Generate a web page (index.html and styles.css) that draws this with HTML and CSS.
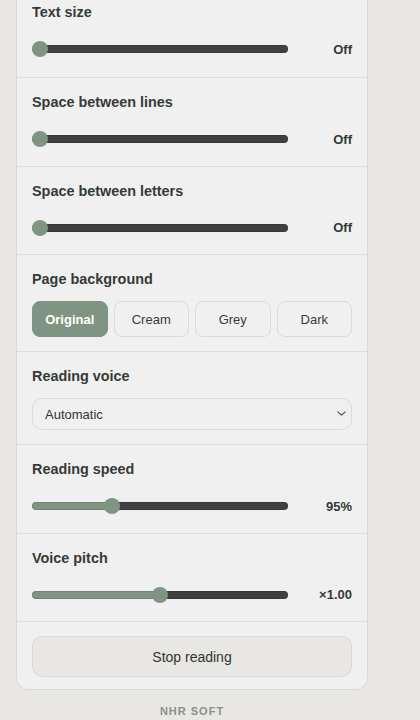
FILE: index.html
```html
<!DOCTYPE html>
<html lang="en">
<head>
<meta charset="utf-8">
<title>Reading settings</title>
<link rel="stylesheet" href="styles.css">
</head>
<body>
<main class="page">
  <div class="panel">
    <section class="section section-slider">
      <h3 class="label">Text size</h3>
      <div class="slider-row">
        <input class="range" type="range" min="0" max="10" value="0" style="--p:0">
        <span class="value">Off</span>
      </div>
    </section>
    <section class="section section-slider">
      <h3 class="label">Space between lines</h3>
      <div class="slider-row">
        <input class="range" type="range" min="0" max="10" value="0" style="--p:0">
        <span class="value">Off</span>
      </div>
    </section>
    <section class="section section-slider">
      <h3 class="label">Space between letters</h3>
      <div class="slider-row">
        <input class="range" type="range" min="0" max="10" value="0" style="--p:0">
        <span class="value">Off</span>
      </div>
    </section>
    <section class="section">
      <h3 class="label">Page background</h3>
      <div class="choices">
        <button class="choice is-active" type="button">Original</button>
        <button class="choice" type="button">Cream</button>
        <button class="choice" type="button">Grey</button>
        <button class="choice" type="button">Dark</button>
      </div>
    </section>
    <section class="section">
      <h3 class="label">Reading voice</h3>
      <div class="select-wrap">
        <select class="select">
          <option>Automatic</option>
        </select>
        <svg class="chevron" width="9" height="5" viewBox="0 0 9 5" aria-hidden="true"><path d="M0.8 0.8l3.7 3.4 3.7-3.4" fill="none" stroke="#444" stroke-width="1.1" stroke-linecap="round" stroke-linejoin="round"/></svg>
      </div>
    </section>
    <section class="section section-slider">
      <h3 class="label">Reading speed</h3>
      <div class="slider-row">
        <input class="range" type="range" min="50" max="200" value="95" style="--p:0.3">
        <span class="value">95%</span>
      </div>
    </section>
    <section class="section section-slider">
      <h3 class="label">Voice pitch</h3>
      <div class="slider-row">
        <input class="range" type="range" min="0.5" max="1.5" step="0.05" value="1" style="--p:0.5">
        <span class="value">×1.00</span>
      </div>
    </section>
    <section class="section section-action">
      <button class="stop" type="button">Stop reading</button>
    </section>
  </div>
  <footer class="footer">NHR SOFT</footer>
</main>
</body>
</html>
```
FILE: styles.css
```css
* { box-sizing: border-box; }

html, body {
  margin: 0;
  padding: 0;
  background: #e8e7e3;
  font-family: "Liberation Sans", Arial, sans-serif;
  color: #353a36;
}

body { height: 720px; overflow: hidden; }

.page {
  width: 352px;
  margin-left: 16px;
  margin-top: -13px;
}

.panel {
  background: #f0f0f0;
  border: 1px solid #d9d9d3;
  border-radius: 0 0 12px 12px;
}

.section {
  padding: 14px 15px 14px 15px;
  border-top: 1px solid #dededa;
}

.section:first-child {
  border-top: none;
}

.section-slider { padding-bottom: 13.5px; }

.section-slider:first-child { padding-bottom: 15px; }

.label {
  margin: 0 0 12px;
  font-size: 14.4px;
  line-height: 20px;
  font-weight: 700;
  color: #353a36;
}

.section-slider .label { margin-bottom: 14px; }

.slider-row {
  display: grid;
  grid-template-columns: 1fr 48px;
  column-gap: 16px;
  align-items: center;
  height: 26px;
}

.range {
  -webkit-appearance: none;
  appearance: none;
  margin: 0;
  width: 100%;
  height: 8px;
  border-radius: 4px;
  outline: none;
  background: linear-gradient(to right, #7f9482 calc(8px + var(--p) * (100% - 16px)), #404040 0);
  box-shadow: inset 0 0 0 1px rgba(0,0,0,0.12);
}

.range::-webkit-slider-thumb {
  -webkit-appearance: none;
  appearance: none;
  width: 16px;
  height: 16px;
  border-radius: 50%;
  background: #7f9482;
  border: none;
}

.value {
  text-align: right;
  font-size: 13px;
  font-weight: 700;
  color: #353a36;
}

.choices {
  display: grid;
  grid-template-columns: repeat(4, 1fr);
  gap: 6px;
}

.choice {
  height: 36px;
  margin: 0;
  border: 1.5px solid #dcdcd5;
  border-radius: 8px;
  background: #f0f0f0;
  font-family: "Liberation Sans", Arial, sans-serif;
  font-size: 13px;
  color: #3a3a3a;
  padding: 0;
}

.choice.is-active {
  background: #7f9482;
  border-color: #7f9482;
  color: #ffffff;
  font-weight: 700;
}

.select-wrap {
  position: relative;
}

.select {
  -webkit-appearance: none;
  appearance: none;
  display: block;
  width: 100%;
  height: 32px;
  margin: 0;
  padding: 0 12px;
  border: 1px solid #dcdcd5;
  border-radius: 10px;
  background: #f0f0f0;
  font-family: "Liberation Sans", Arial, sans-serif;
  font-size: 13px;
  color: #333333;
}

.chevron {
  position: absolute;
  right: 6px;
  top: 13px;
  pointer-events: none;
}

.section-action {
  padding-bottom: 12px;
}

.stop {
  display: block;
  width: 100%;
  height: 41px;
  margin: 0;
  border: 1.5px solid #dadad3;
  border-radius: 10px;
  background: #e8e7e3;
  font-family: "Liberation Sans", Arial, sans-serif;
  font-size: 14px;
  color: #333333;
}

.footer {
  margin-top: 15px;
  text-align: center;
  font-size: 11px;
  line-height: 13px;
  font-weight: 700;
  letter-spacing: 1px;
  color: #8a8f8a;
}
```
